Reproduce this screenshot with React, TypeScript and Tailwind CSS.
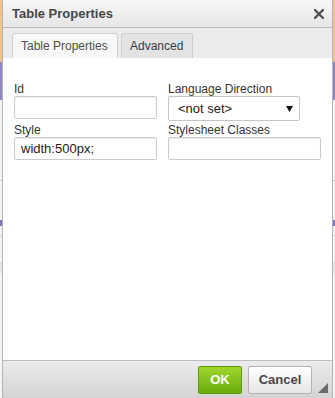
import React from "react";

// thin slice of the page behind the dialog
function EdgeStrip() {
  return (
    <div className="flex w-[2px] flex-col bg-[#f4f4f4]">
      <div className="h-[62px] bg-[#efc48a]" />
      <div className="h-[38px] bg-[#8d88c4]" />
      <div className="h-[80px]" />
      <div className="h-px bg-[#cfcfcf]" />
      <div className="h-[39px]" />
      <div className="h-[6px] bg-[#7e78c0]" />
      <div className="h-[9px]" />
      <div className="h-px bg-[#d6d6d6]" />
      <div className="h-[26px]" />
      <div className="h-px bg-[#d6d6d6]" />
      <div className="h-[10px] bg-[#e6e6e6]" />
    </div>
  );
}

function TextInput({ value = "" }: { value?: string }) {
  return (
    <div className="flex h-[23px] w-[143px] items-center rounded-[2px] border border-[#c9cccf] bg-white pl-[6px] text-[13px] text-[#222] shadow-[inset_0_1px_1px_rgba(0,0,0,0.08)]">
      {value}
    </div>
  );
}

export default function App() {
  return (
    <div className="flex h-[398px] w-[335px] overflow-hidden bg-white font-['Liberation_Sans',Arial,sans-serif]">
      <EdgeStrip />
      <div className="flex flex-1 flex-col border-x border-[#b4b4b4] bg-white">
        {/* title */}
        <div className="flex h-[28px] shrink-0 items-center justify-between border-b border-[#b9b9b9] bg-gradient-to-b from-[#f7f7f7] to-[#e6e6e6] pl-[9px] pr-[8px]">
          <span className="text-[13px] font-bold text-[#474747]">Table Properties</span>
          <svg width="10" height="10" viewBox="0 0 10 10" className="mt-px">
            <path d="M1 1L9 9M9 1L1 9" stroke="#555" strokeWidth="2.4" strokeLinecap="square" />
          </svg>
        </div>

        {/* tabs */}
        <div className="flex h-[30px] shrink-0 items-end gap-[3px] bg-[#ebebeb] pl-[9px]">
          <div className="flex h-[25px] w-[106px] items-center rounded-t-[3px] border border-b-0 border-[#d1d1d1] bg-[#f8f8f8] pl-[8px] text-[12px] text-[#4d4d4d]">
            Table Properties
          </div>
          <div className="flex h-[25px] w-[72px] items-center rounded-t-[3px] border border-b-0 border-[#cfcfcf] bg-[#e3e3e3] pl-[8px] text-[12px] text-[#3b3b3b]">
            Advanced
          </div>
        </div>

        {/* body */}
        <div className="flex-1 px-[11px] pt-[25px]">
          <div className="grid grid-cols-[143px_153px] items-start gap-x-[11px] gap-y-[3px] text-[12px] text-[#333]">
            <div>
              <div className="leading-[13px]">Id</div>
              <TextInput />
            </div>
            <div>
              <div className="leading-[13px]">Language Direction</div>
              <div className="flex h-[25px] w-[132px] items-center justify-between rounded-[2px] border border-[#c6c6c6] bg-white pl-[9px] pr-[6px] text-[13px] text-[#222]">
                <span>&lt;not set&gt;</span>
                <svg width="7" height="6" viewBox="0 0 7 6">
                  <polygon points="0,0 7,0 3.5,6" fill="#111" />
                </svg>
              </div>
            </div>
            <div>
              <div className="leading-[13px]">Style</div>
              <TextInput value="width:500px;" />
            </div>
            <div>
              <div className="leading-[13px]">Stylesheet Classes</div>
              <div className="h-[23px] w-[153px] rounded-[2px] border border-[#c9cccf] bg-white shadow-[inset_0_1px_1px_rgba(0,0,0,0.08)]" />
            </div>
          </div>
        </div>

        {/* footer */}
        <div className="flex h-[38px] shrink-0 items-start justify-end border-t border-[#bdbdbd] bg-gradient-to-b from-[#ebebeb] to-[#d4d4d4] pr-[4px] pt-[5px]">
          <button className="h-[28px] w-[44px] rounded-[2px] border border-[#5e9d0f] bg-gradient-to-b from-[#9fd62b] to-[#69ad0c] text-[13px] font-bold text-white">
            OK
          </button>
          <button className="ml-[6px] h-[28px] w-[64px] rounded-[2px] border border-[#b3b3b3] bg-gradient-to-b from-[#ffffff] to-[#e6e6e6] text-[13px] font-bold text-[#474747]">
            Cancel
          </button>
          <svg width="10" height="10" viewBox="0 0 10 10" className="ml-[6px] self-end mb-[5px]">
            <polygon points="10,0 10,10 0,10" fill="#6a6a6a" />
          </svg>
        </div>
      </div>
      <EdgeStrip />
    </div>
  );
}
